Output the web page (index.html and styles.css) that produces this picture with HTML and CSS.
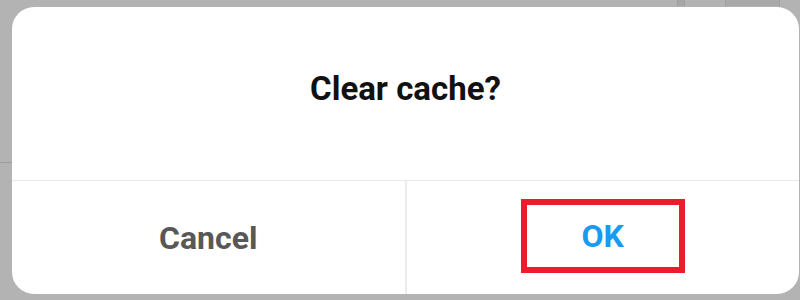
FILE: index.html
```html
<!DOCTYPE html>
<html>

<head>
    <meta name="viewport" content="width=device-width, initial-scale=1">
    <link rel="stylesheet" href="styles.css">
</head>

<body>
    <div class="backdrop-line"></div>
    <div class="backdrop-tab"></div>
    <div class="backdrop-tick"></div>

    <div class="dialog">
        <div class="dialog-title">
            <h1>Clear cache?</h1>
        </div>
        <div class="dialog-actions">
            <div class="action cancel">Cancel</div>
            <div class="action ok">
                <span class="highlight">OK</span>
            </div>
        </div>
    </div>
</body>

</html>
```

FILE: styles.css
```css
body {
    margin: 0;
    width: 800px;
    height: 300px;
    overflow: hidden;
    background: #b3b3b3;
    font-family: Roboto, "Liberation Sans", sans-serif;
    position: relative;
}

.backdrop-line {
    position: absolute;
    left: 0;
    top: 162px;
    width: 12px;
    height: 1px;
    background: #9c9c9c;
}

.backdrop-tab {
    position: absolute;
    left: 725px;
    top: 0;
    width: 53px;
    height: 6px;
    background: #a9a9a9;
    border-left: 1px solid #9e9e9e;
    border-right: 1px solid #9e9e9e;
}

.backdrop-tick {
    position: absolute;
    left: 677px;
    top: 0;
    width: 6px;
    height: 6px;
    background: #a7a7a7;
    border-left: 1px solid #9e9e9e;
    border-right: 1px solid #9e9e9e;
}

.dialog {
    position: relative;
    margin: 7px 0 0 12px;
    width: 787px;
    height: 287px;
    background: #fff;
    border-radius: 22px;
    display: flex;
    flex-direction: column;
}

.dialog-title {
    box-sizing: border-box;
    height: 174px;
    padding-bottom: 10px;
    display: flex;
    align-items: center;
    justify-content: center;
    border-bottom: 1px solid #e8e8e8;
}

.dialog-title h1 {
    margin: 0;
    font-size: 33px;
    font-weight: bold;
    color: #111;
}

.dialog-actions {
    flex: 1;
    display: flex;
}

.action {
    flex: 1;
    display: flex;
    align-items: center;
    justify-content: center;
    font-size: 32px;
    font-weight: bold;
}

.cancel {
    color: #585858;
    border-right: 2px solid #ececec;
}

.ok {
    color: #1a9af0;
}

.highlight {
    box-sizing: border-box;
    width: 164px;
    height: 74px;
    margin-top: -3px;
    border: 6px solid #ec1c2c;
    display: flex;
    align-items: center;
    justify-content: center;
}
```
